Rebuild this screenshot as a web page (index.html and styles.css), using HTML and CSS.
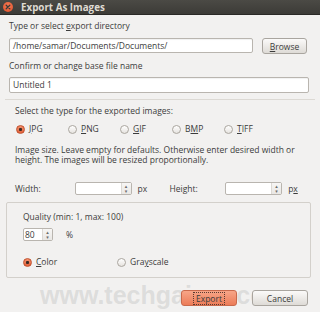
FILE: index.html
```html
<!DOCTYPE html>
<html lang="en">
<head>
    <meta charset="UTF-8">
    <title>Export As Images</title>
    <link rel="stylesheet" href="styles.css">
</head>
<body>

    <div class="titlebar">
        <span class="close-btn">
            <svg width="10" height="10" viewBox="0 0 10 10"><path d="M3.2 3.2 L6.8 6.8 M6.8 3.2 L3.2 6.8" stroke="#3c3b37" stroke-width="1.3" stroke-linecap="round"/></svg>
        </span>
        <span class="title">Export As Images</span>
    </div>

    <div class="dialog">
        <p class="label first">Type or select <u>e</u>xport directory</p>
        <div class="dir-row">
            <div class="field dir-field">/home/samar/Documents/Documents/</div>
            <button class="btn browse"><u>B</u>rowse</button>
        </div>

        <p class="label second">Confirm or change base file name</p>
        <div class="field name-field">Untitled 1</div>

        <div class="separator"></div>

        <div class="section">
            <p class="label type-label">Select the type for the exported images:</p>
            <div class="types">
                <label class="radio-opt"><span class="radio on"></span><span><u>J</u>PG</span></label>
                <label class="radio-opt"><span class="radio"></span><span><u>P</u>NG</span></label>
                <label class="radio-opt"><span class="radio"></span><span><u>G</u>IF</span></label>
                <label class="radio-opt"><span class="radio"></span><span>B<u>M</u>P</span></label>
                <label class="radio-opt"><span class="radio"></span><span><u>T</u>IFF</span></label>
            </div>

            <p class="size-note">Image size. Leave empty for defaults. Otherwise enter desired width or height. The images will be resized proportionally.</p>

            <div class="size-row">
                <span class="size-label">Width:</span>
                <div class="spin wide"><span class="spin-value"></span><span class="spin-arrows">▴<br>▾</span></div>
                <span class="unit">px</span>
                <span class="size-label h">Height:</span>
                <div class="spin wide"><span class="spin-value"></span><span class="spin-arrows">▴<br>▾</span></div>
                <span class="unit">p<u>x</u></span>
            </div>
        </div>

        <div class="frame">
            <p class="label">Quality (min: 1, max: 100)</p>
            <div class="quality-row">
                <div class="spin small"><span class="spin-value">80</span><span class="spin-arrows">▴<br>▾</span></div>
                <span class="unit pct">%</span>
            </div>
            <div class="colors">
                <label class="radio-opt"><span class="radio on"></span><span><u>C</u>olor</span></label>
                <label class="radio-opt"><span class="radio"></span><span>Gra<u>y</u>scale</span></label>
            </div>
        </div>

        <div class="actions">
            <button class="btn export"><span class="focus">Export</span></button>
            <button class="btn cancel">Cancel</button>
        </div>
    </div>

    <div class="watermark">www.techgainer.com</div>

</body>
</html>
```

FILE: styles.css
```css
/* GTK-like dialog, Ambiance theme colours */
body { margin: 0; width: 320px; height: 312px; overflow: hidden; position: relative; background-color: #f2f1f0; font-family: "Open Sans", "DejaVu Sans", sans-serif; font-size: 8.5px; color: #3c3c3c; }
p { margin: 0; }
u { text-decoration-thickness: 1px; text-underline-offset: 1px; }

.titlebar { height: 14px; display: flex; align-items: center; padding-left: 3px; background: linear-gradient(#4b4a45, #3c3b37); border-bottom: 1px solid #2a2926; }
.close-btn { width: 10px; height: 10px; border-radius: 50%; background: radial-gradient(circle at 50% 35%, #f47a55, #df4f28); display: flex; }
.title { margin-left: 8px; color: #dfdbd2; font-weight: bold; font-size: 9.8px; }

.dialog { padding: 0 0 0 9px; }
.label { line-height: 12px; }
.label.first { margin-top: 5px; }
.label.second { margin-top: 6px; }

.field { box-sizing: border-box; height: 16px; line-height: 14px; padding-left: 3px; background: #fff; border: 1px solid #b9b5af; border-radius: 2px; box-shadow: inset 0 1px 1px rgba(0,0,0,0.06); }
.dir-row { display: flex; margin-top: 6px; gap: 9px; }
.dir-field { width: 244px; height: 15px; line-height: 13px; }
.name-field { width: 300px; margin-top: 5px; }

.btn { box-sizing: border-box; height: 16px; padding: 0; font-family: inherit; font-size: 8.5px; color: #3c3c3c; border: 1px solid #a9a59f; border-radius: 3px; background: linear-gradient(#fbfaf9, #dedbd6); }
.browse { width: 45px; }

.separator { height: 1px; margin: 6px 5px 0 -4px; background-color: #dcd9d4; }

.section { padding-left: 6px; }
.type-label { margin-top: 5px; }
.types { display: grid; grid-template-columns: repeat(5, 52px); margin-top: 6px; padding-left: 1px; height: 12px; }
.radio-opt { display: flex; align-items: center; gap: 4px; line-height: 12px; }
.radio { box-sizing: border-box; width: 9px; height: 9px; border-radius: 50%; border: 1px solid #aaa69f; background: linear-gradient(#ffffff, #e6e3df); }
.radio.on { border-color: #c0502d; background: radial-gradient(circle, #3a2a24 0 1.3px, transparent 1.8px), linear-gradient(#f4906c, #e2613a); }

.size-note { margin-top: 10px; line-height: 10px; width: 290px; }

.size-row { display: flex; align-items: center; margin-top: 17px; height: 13px; }
.size-label { width: 60px; }
.size-label.h { width: 56px; }
.unit { width: 32px; margin-left: 6px; }

.spin { box-sizing: border-box; display: flex; height: 13px; background: #fff; border: 1px solid #b9b5af; border-radius: 2px; }
.spin.wide { width: 57px; }
.spin.small { width: 30px; }
.spin-value { flex: 1; padding-left: 1px; line-height: 11px; }
.spin-arrows { width: 9px; font-size: 5px; line-height: 5px; text-align: center; color: #6a6a6a; border-left: 1px solid #dcd9d4; background: linear-gradient(#f7f6f5, #e9e7e4); padding-top: 1px; }

.frame { box-sizing: border-box; width: 305px; height: 76px; margin: 7px 0 0 -3px; padding: 8px 0 0 16px; border: 1px solid #d3d0cb; border-radius: 2px; }
.quality-row { display: flex; align-items: center; margin-top: 5px; }
.pct { margin-left: 13px; }
.colors { display: grid; grid-template-columns: 94px 94px; margin-top: 15px; }

.actions { position: relative; z-index: 1; display: flex; justify-content: flex-end; gap: 15px; margin: 12px 12px 0 0; }
.export, .cancel { width: 56px; }
.export { border-color: #c96a4c; background: linear-gradient(#f7a688, #ec7c58); }
.export .focus { padding: 0 2px; outline: 1px dotted #5a3a30; }

.watermark { position: absolute; left: 40px; top: 281px; font-family: "Liberation Sans", Arial, sans-serif; font-weight: bold; font-size: 25px; color: rgba(170, 170, 170, 0.3); pointer-events: none; }
```
